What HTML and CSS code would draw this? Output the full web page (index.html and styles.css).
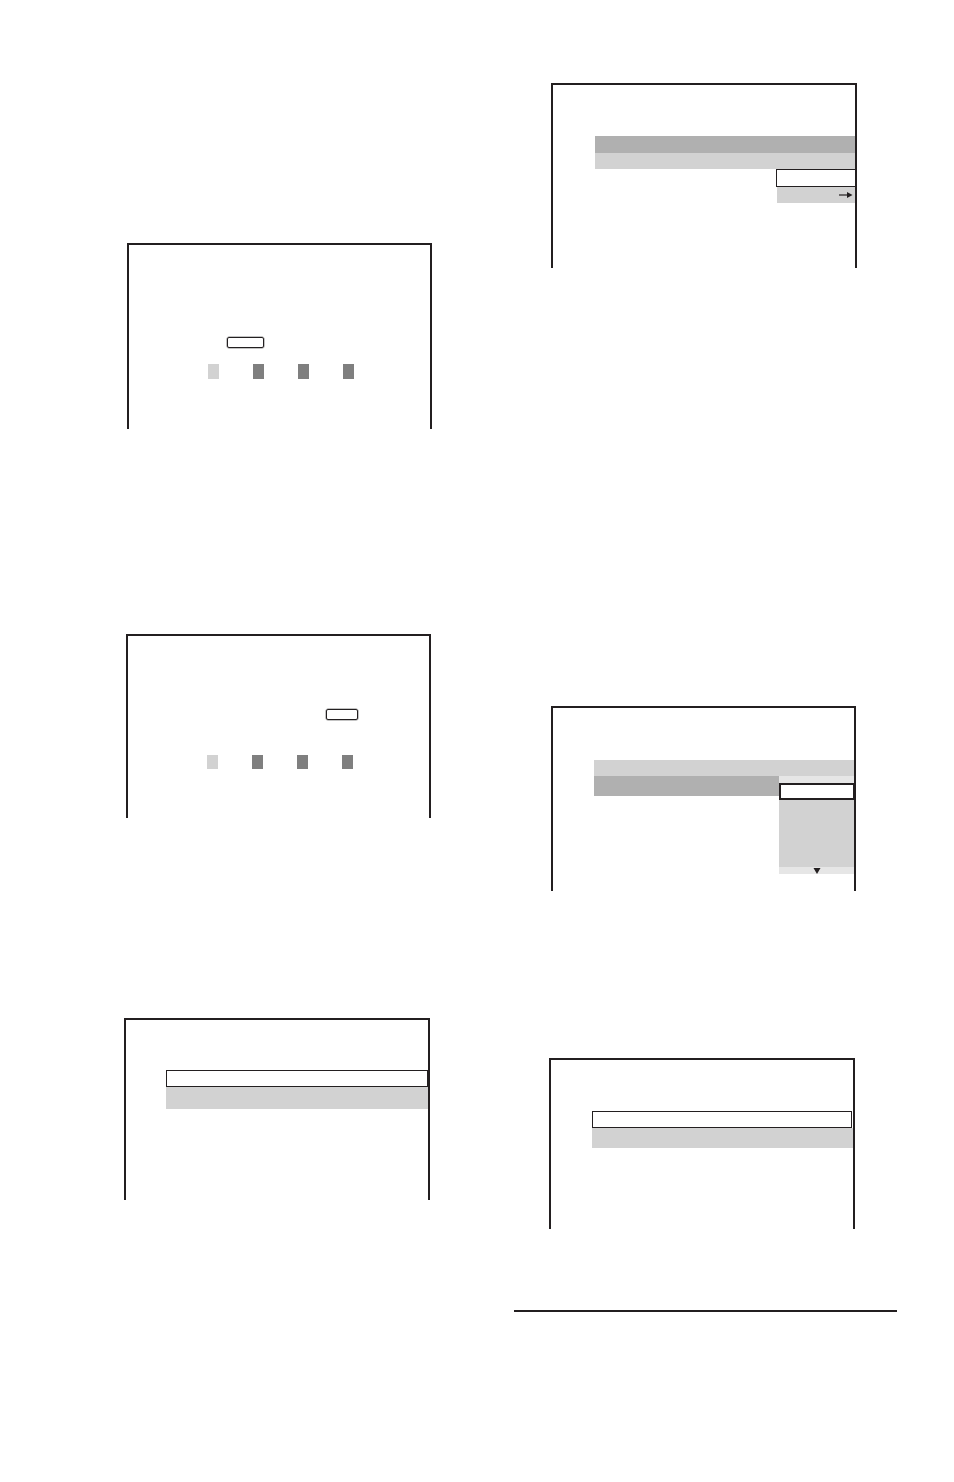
FILE: index.html
```html
<!DOCTYPE html>
<html lang="en">
<head>
    <meta charset="UTF-8">
    <meta name="viewport" content="width=device-width, initial-scale=1.0">
    <title>Setup screens</title>
    <link rel="stylesheet" href="styles.css">
</head>
<body>
    <div class="page">
        <div class="col col-left">
            <!-- password entry, cursor on first digit -->
            <div class="screen screen-1">
                <div class="code-box code-box-1"></div>
                <div class="digits">
                    <span class="digit digit-on"></span>
                    <span class="digit"></span>
                    <span class="digit"></span>
                    <span class="digit"></span>
                </div>
            </div>

            <!-- password entry, cursor moved right -->
            <div class="screen screen-2">
                <div class="code-box code-box-2"></div>
                <div class="digits digits-2">
                    <span class="digit digit-on"></span>
                    <span class="digit"></span>
                    <span class="digit"></span>
                    <span class="digit"></span>
                </div>
            </div>

            <div class="screen screen-3">
                <div class="menu menu-3">
                    <div class="row row-selected"></div>
                    <div class="row row-light row-tall"></div>
                </div>
            </div>
        </div>

        <div class="col col-right">
            <div class="screen screen-4">
                <div class="menu menu-4">
                    <div class="row row-dark"></div>
                    <div class="row row-light"></div>
                    <div class="sub">
                        <div class="sub-item sub-selected"></div>
                        <div class="sub-item sub-light">
                            <svg class="arrow" width="14" height="8" viewBox="0 0 14 8">
                                <line x1="0" y1="4" x2="9" y2="4" stroke="#231f20" stroke-width="1.2"/>
                                <polygon points="8,1 13.5,4 8,7" fill="#231f20"/>
                            </svg>
                        </div>
                    </div>
                </div>
            </div>

            <div class="screen screen-5">
                <div class="menu menu-5">
                    <div class="row row-light"></div>
                    <div class="split">
                        <div class="row row-dark split-main"></div>
                        <div class="dropdown">
                            <div class="drop-strip"></div>
                            <div class="drop-selected"></div>
                            <div class="drop-list"></div>
                            <div class="drop-strip drop-foot">
                                <svg width="8" height="6" viewBox="0 0 8 6">
                                    <polygon points="0.5,0 7.5,0 4,6" fill="#231f20"/>
                                </svg>
                            </div>
                        </div>
                    </div>
                </div>
            </div>

            <div class="screen screen-6">
                <div class="menu menu-6">
                    <div class="row row-selected row-6"></div>
                    <div class="row row-light row-tall row-6b"></div>
                </div>
            </div>

            <hr class="rule">
        </div>
    </div>
</body>
</html>
```

FILE: styles.css
```css
/* Styles go here */
body {
    font-family: "Liberation Sans", Arial, sans-serif;
    margin: 0;
    padding: 0;
    background-color: #fff;
}
.page {
    display: grid;
    grid-template-columns: 308px 383px;
    column-gap: 82px;
    align-items: start;
    padding-left: 124px;
}
.col {
    display: flex;
    flex-direction: column;
}
.col-left {
    padding-top: 243px;
}
.col-right {
    padding-top: 83px;
}

/* tv screen frame: open at the bottom */
.screen {
    box-sizing: border-box;
    border: 2px solid #231f20;
    border-bottom: none;
}
.screen-1 {
    margin-left: 3px;
    width: 305px;
    height: 186px;
    padding-top: 92px;
}
.screen-2 {
    margin-left: 2px;
    margin-top: 205px;
    width: 305px;
    height: 184px;
    padding-top: 73px;
}
.screen-3 {
    margin-top: 200px;
    width: 306px;
    height: 182px;
    padding-top: 50px;
}
.screen-4 {
    margin-left: 37px;
    width: 306px;
    height: 185px;
    padding-top: 51px;
}
.screen-5 {
    margin-left: 37px;
    margin-top: 438px;
    width: 305px;
    height: 185px;
    padding-top: 52px;
}
.screen-6 {
    margin-left: 35px;
    margin-top: 167px;
    width: 306px;
    height: 171px;
    padding-top: 51px;
}

/* password boxes */
.code-box {
    box-sizing: border-box;
    height: 11px;
    border: 1px solid #231f20;
    border-radius: 2px;
    box-shadow: 0 0 0 0.5px #888;
}
.code-box-1 {
    width: 37px;
    margin-left: 98px;
}
.code-box-2 {
    width: 32px;
    margin-left: 198px;
}
.digits {
    display: flex;
    gap: 34px;
    margin-top: 16px;
    margin-left: 79px;
}
.digits-2 {
    margin-top: 35px;
}
.digit {
    width: 11px;
    height: 15px;
    background-color: #7f7f7f;
}
.digits-2 .digit {
    height: 14px;
}
.digit-on {
    background-color: #d2d2d2;
}

/* menu rows */
.menu {
    display: flex;
    flex-direction: column;
}
.menu-3 {
    margin-left: 40px;
}
.menu-4 {
    margin-left: 42px;
}
.menu-5 {
    margin-left: 41px;
}
.menu-6 {
    margin-left: 41px;
}
.row {
    height: 16px;
}
.row-dark {
    background-color: #b0b0b0;
    height: 17px;
}
.row-light {
    background-color: #d2d2d2;
}
.row-tall {
    height: 22px;
}
.row-6b {
    height: 20px;
}
.row-selected {
    box-sizing: border-box;
    height: 17px;
    border: 1px solid #231f20;
    background-color: #fff;
}
.row-6 {
    margin-right: 1px;
}

/* sub menu on the right */
.sub {
    align-self: flex-end;
    width: 79px;
}
.sub-item {
    box-sizing: border-box;
}
.sub-selected {
    height: 18px;
    border: 1px solid #231f20;
    background-color: #fff;
    margin-right: -1px;
}
.sub-light {
    height: 16px;
    margin-left: 1px;
    background-color: #d2d2d2;
    display: flex;
    align-items: center;
    justify-content: flex-end;
    padding-right: 2px;
}

/* dropdown list */
.split {
    display: flex;
}
.split-main {
    flex: 1;
    height: 20px;
}
.dropdown {
    width: 75px;
    display: flex;
    flex-direction: column;
}
.drop-strip {
    height: 7px;
    background-color: #e6e6e6;
}
.drop-selected {
    box-sizing: border-box;
    height: 17px;
    border: 2px solid #231f20;
    background-color: #fff;
    margin-right: -1px;
}
.drop-list {
    height: 67px;
    background-color: #d2d2d2;
}
.drop-foot {
    display: flex;
    justify-content: center;
    align-items: center;
}
.drop-foot svg {
    display: block;
}

.rule {
    border: none;
    border-top: 2px solid #231f20;
    margin: 81px 0 0 0;
    width: 383px;
}
```
